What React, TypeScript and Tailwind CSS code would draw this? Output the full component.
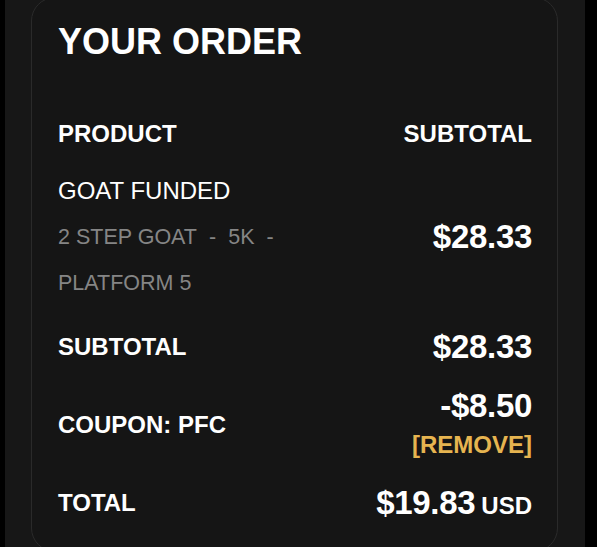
import React from "react";

export default function App() {
  const font = { fontFamily: '"Liberation Sans", Arial, sans-serif' };
  return (
    <div className="w-[597px] h-[547px] bg-black overflow-hidden" style={font}>
      <div className="ml-[5px] w-[580px] h-[547px] bg-[#171717] overflow-hidden">
        <div className="ml-[26px] w-[527px] -mt-[3px] h-[555px] rounded-[24px] border border-[#2a2a2a] bg-[#151515] pl-[26px] pr-[25px] pt-[22px]">
          <h1 className="text-[36px] leading-[44px] font-bold text-white">YOUR ORDER</h1>

          <div className="mt-[55px] flex justify-between items-center text-[24px] leading-[30px] font-bold text-white">
            <span>PRODUCT</span>
            <span>SUBTOTAL</span>
          </div>

          <div className="mt-[19px] flex justify-between items-center">
            <div className="w-[260px]">
              <div className="text-[24px] leading-[46px] text-white">GOAT FUNDED</div>
              <div className="text-[21.5px] leading-[46px] text-[#858585]">
                2 STEP GOAT<span className="mx-[12px]">-</span>5K<span className="mx-[12px]">-</span>
                <br />
                PLATFORM 5
              </div>
            </div>
            <div className="text-[33px] leading-[40px] font-bold text-white tracking-[-0.3px]">$28.33</div>
          </div>

          <div className="mt-[21px] flex justify-between items-center h-[40px]">
            <span className="text-[24px] font-bold text-white">SUBTOTAL</span>
            <span className="text-[33px] font-bold text-white tracking-[-0.3px]">$28.33</span>
          </div>

          <div className="mt-[19px] flex justify-between items-center">
            <span className="text-[24px] font-bold text-white">COUPON: PFC</span>
            <div className="flex flex-col items-end">
              <span className="text-[33px] leading-[40px] font-bold text-white tracking-[-0.3px]">-$8.50</span>
              <span className="text-[24px] leading-[38px] font-bold text-[#e6b450]">[REMOVE]</span>
            </div>
          </div>

          <div className="mt-[19px] flex justify-between items-center h-[40px]">
            <span className="text-[24px] font-bold text-white">TOTAL</span>
            <span className="flex items-baseline gap-[6px] text-white font-bold">
              <span className="text-[33px] tracking-[-0.3px]">$19.83</span>
              <span className="text-[24px]">USD</span>
            </span>
          </div>
        </div>
      </div>
    </div>
  );
}
